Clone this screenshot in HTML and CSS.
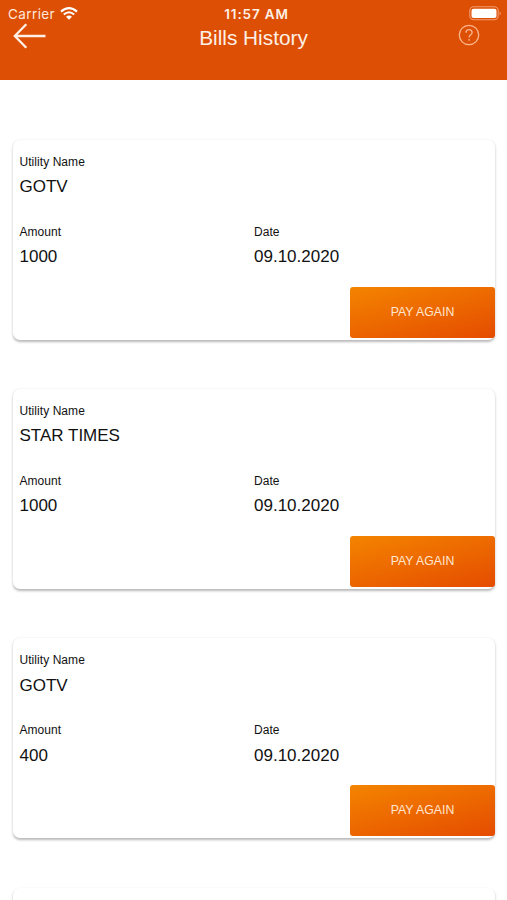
FILE: index.html
```html
<!DOCTYPE html>
<html lang="en">
<head>
<meta charset="utf-8">
<title>Bills History</title>
<link rel="stylesheet" href="styles.css">
</head>
<body>
<header class="header">
  <div class="status">
    <div class="carrier"><span>Carrier</span>
      <svg class="wifi" width="18" height="13" viewBox="0 0 18 13" fill="none" stroke="#fff" stroke-width="2.1"><path d="M1 4.6Q9-2.3 17 4.6M3.8 7.5Q9 3 14.2 7.5"/><path d="M6 9.8Q9 7.3 12 9.8L9 12.8Z" fill="#fff" stroke="none"/></svg>
    </div>
    <div class="clock">11:57 AM</div>
    <svg class="battery" width="33" height="15" viewBox="0 0 33 15"><rect x=".8" y=".8" width="28.4" height="13" rx="4" fill="none" stroke="#f29b70" stroke-width="1.1"/><rect x="2.5" y="2.7" width="25" height="9.4" rx="2" fill="#fff"/><path d="M30.6 5.3Q33 7.4 30.6 9.5Z" fill="#f29b70"/></svg>
  </div>
  <div class="nav">
    <svg class="back" width="34" height="26" viewBox="0 0 34 26" fill="none" stroke="#fff0e6" stroke-width="2.3"><path d="M13.3 1.2L1.8 13L13.3 24.8M2 13H32.5"/></svg>
    <h1 class="title">Bills History</h1>
    <svg class="help" width="22" height="22" viewBox="0 0 22 22" fill="none" stroke="#fbb58c" stroke-width="1.3"><circle cx="11" cy="11" r="9.7"/><path d="M8 8.7C8 4.7 14.1 4.8 14.1 8.4C14.1 10.8 11.1 10.8 11.1 13.6M11.1 15.1V16.7"/></svg>
  </div>
</header>
<main class="list">
  <section class="card">
    <div class="field"><div class="label">Utility Name</div><div class="value">GOTV</div></div>
    <div class="row">
      <div class="field"><div class="label">Amount</div><div class="value">1000</div></div>
      <div class="field"><div class="label">Date</div><div class="value">09.10.2020</div></div>
    </div>
    <button class="pay">PAY AGAIN</button>
  </section>
  <section class="card">
    <div class="field"><div class="label">Utility Name</div><div class="value">STAR TIMES</div></div>
    <div class="row">
      <div class="field"><div class="label">Amount</div><div class="value">1000</div></div>
      <div class="field"><div class="label">Date</div><div class="value">09.10.2020</div></div>
    </div>
    <button class="pay">PAY AGAIN</button>
  </section>
  <section class="card">
    <div class="field"><div class="label">Utility Name</div><div class="value">GOTV</div></div>
    <div class="row">
      <div class="field"><div class="label">Amount</div><div class="value">400</div></div>
      <div class="field"><div class="label">Date</div><div class="value">09.10.2020</div></div>
    </div>
    <button class="pay">PAY AGAIN</button>
  </section>
  <section class="card card-next"></section>
</main>
</body>
</html>
```
FILE: styles.css
```css
* {
  box-sizing: border-box;
}

body {
  margin: 0;
  height: 900px;
  overflow: hidden;
  background: #fff;
  color: #111;
  font-family: "Liberation Sans", Arial, sans-serif;
}

.header {
  height: 80px;
  background: #dc4f05;
  color: #fff;
}

.status {
  display: grid;
  grid-template-columns: 1fr auto 1fr;
  align-items: start;
  height: 24px;
  padding: 6px 5px 0 8px;
  font-family: Inter, sans-serif;
  font-size: 13.5px;
  line-height: 16px;
}

.carrier {
  display: flex;
  gap: 5px;
  color: #ffe8da;
  letter-spacing: 0.4px;
}

.wifi {
  margin-top: 1px;
}

.clock {
  margin-left: 3px;
  font-weight: 600;
  letter-spacing: 0.85px;
  color: #fff0e6;
}

.battery {
  justify-self: end;
}

.nav {
  display: grid;
  grid-template-columns: 1fr auto 1fr;
  align-items: start;
  padding: 0 27px 0 13px;
}

.back {
  margin-top: -1px;
}

.title {
  margin: 2px 0 0 14px;
  font-size: 20.8px;
  font-weight: 400;
  line-height: 24px;
  color: #fff0e6;
}

.help {
  justify-self: end;
  margin-top: -0.5px;
}

.list {
  display: flex;
  flex-direction: column;
  gap: 49.2px;
  height: 820px;
  padding: 60px 12px 0 13px;
  overflow: hidden;
}

.card {
  display: flex;
  flex-direction: column;
  flex: none;
  height: 200px;
  padding: 14px 0 2px 6.5px;
  border-radius: 7px;
  background: #fff;
  box-shadow: 0 1.5px 2.5px rgba(0, 0, 0, 0.28);
}

.card-next {
  height: 13px;
  padding: 0;
  border-radius: 7px 7px 0 0;
}

.row {
  display: grid;
  grid-template-columns: 234.5px 1fr;
  margin-top: 23px;
}

.label {
  font-size: 12px;
  line-height: 16px;
  letter-spacing: 0.06px;
}

.value {
  margin-top: 7.3px;
  font-size: 17px;
  line-height: 20px;
}

.field {
  height: 47px;
}

.pay {
  align-self: flex-end;
  width: 145px;
  height: 51px;
  margin-top: auto;
  padding: 0 0 2px;
  border: 0;
  border-radius: 3px;
  background: linear-gradient(165deg, #f48400, #e54c00);
  color: #ffe6d0;
  font-family: inherit;
  font-size: 12.3px;
}
```
